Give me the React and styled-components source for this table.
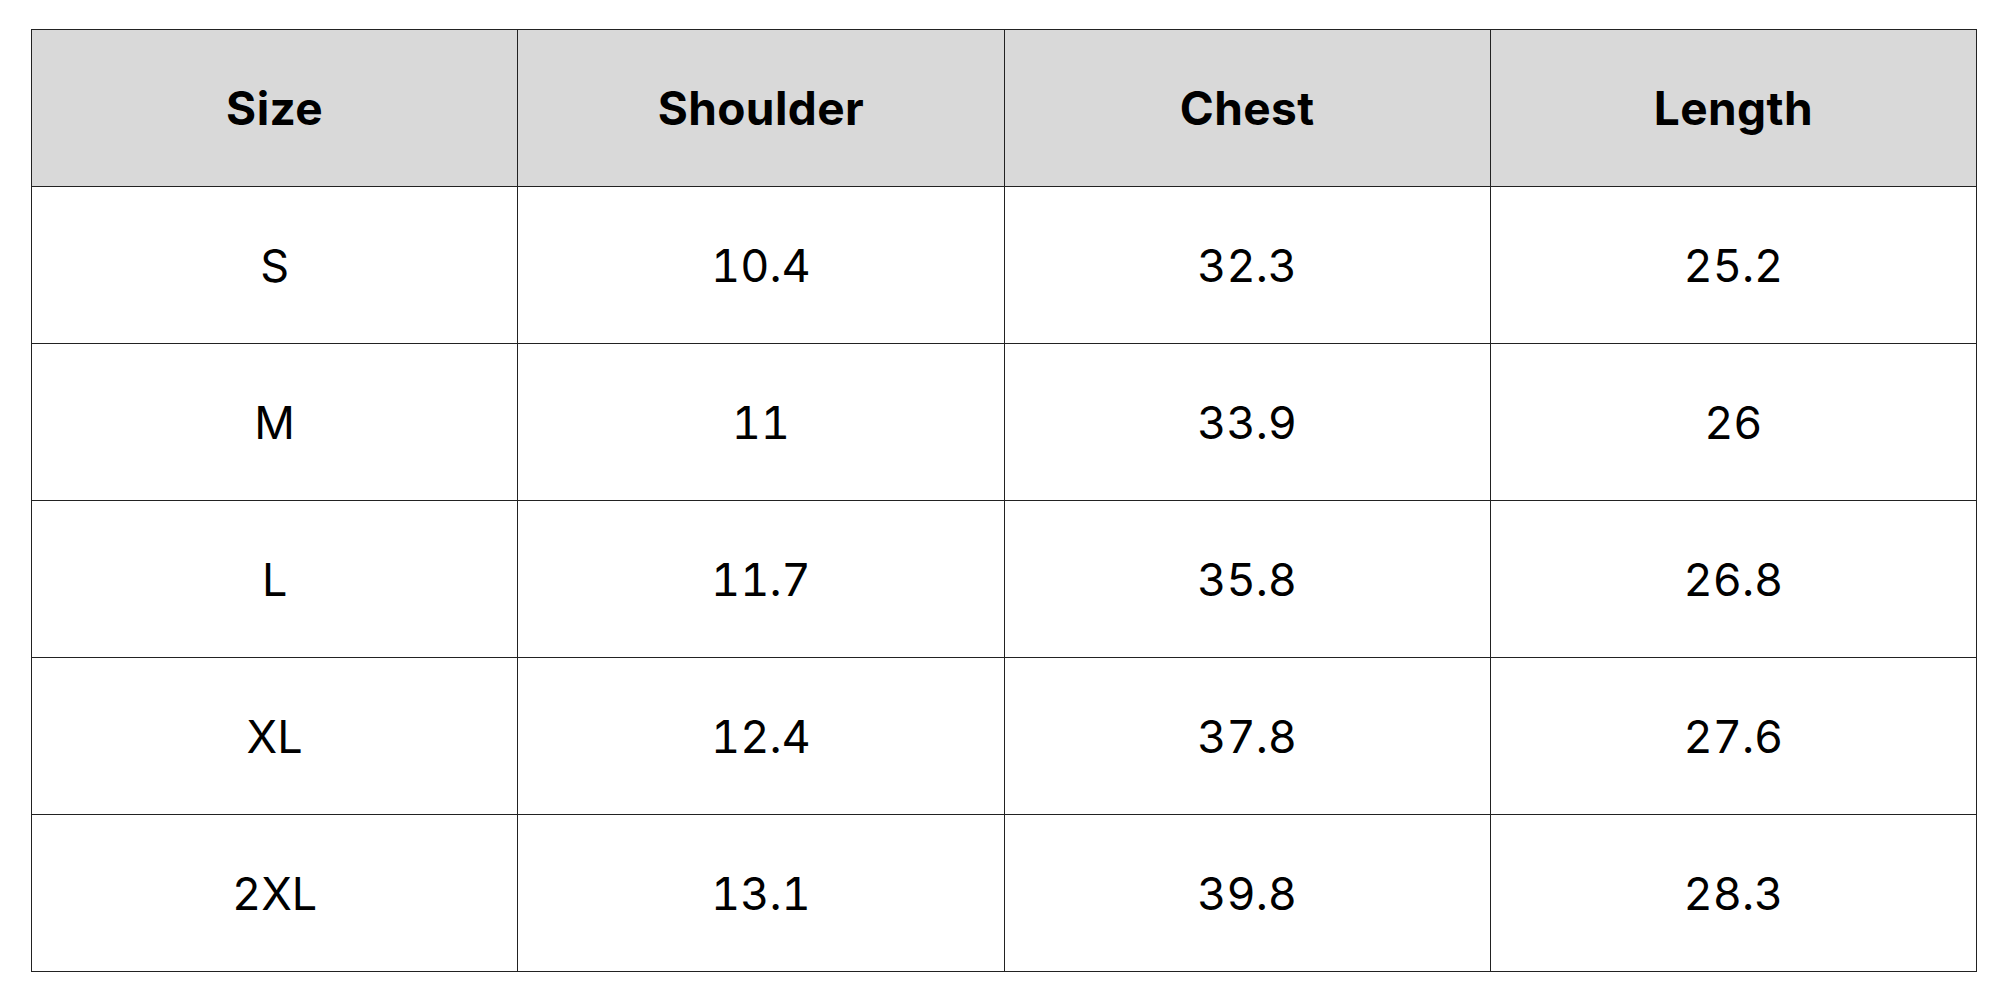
import React from "react"
import styled, { createGlobalStyle } from "styled-components"

const GlobalStyle = createGlobalStyle`
  html, body {
    margin: 0;
    padding: 0;
    background: #ffffff;
  }
  body {
    font-family: Inter, "Open Sans", sans-serif;
    color: #000;
  }
`

const Page = styled.div`
  width: 2000px;
  height: 1000px;
  padding: 29px 23px 0 31px;
  box-sizing: border-box;
`

const Table = styled.table`
  width: 1946px;
  border-collapse: collapse;
  table-layout: fixed;
  border: 1.5px solid #444;
`

const HeadCell = styled.th`
  height: 156px;
  background: #d9d9d9;
  border: 1px solid #222;
  font-size: 46px;
  font-weight: 700;
  text-align: center;
  vertical-align: middle;
  padding: 0;
  letter-spacing: 0.4px;
`

const Cell = styled.td`
  height: 156px;
  border: 1px solid #222;
  font-size: 45px;
  font-weight: 400;
  font-variant-numeric: tabular-nums;
  text-align: center;
  vertical-align: middle;
  padding: 0;
`

const columns = ["Size", "Shoulder", "Chest", "Length"]

const rows = [
  ["S", "10.4", "32.3", "25.2"],
  ["M", "11", "33.9", "26"],
  ["L", "11.7", "35.8", "26.8"],
  ["XL", "12.4", "37.8", "27.6"],
  ["2XL", "13.1", "39.8", "28.3"],
]

export default function App() {
  return (
    <Page>
      <GlobalStyle />
      <Table>
        <thead>
          <tr>
            {columns.map(c => (
              <HeadCell key={c}>{c}</HeadCell>
            ))}
          </tr>
        </thead>
        <tbody>
          {rows.map(r => (
            <tr key={r[0]}>
              {r.map((v, i) => (
                <Cell key={i}>{v}</Cell>
              ))}
            </tr>
          ))}
        </tbody>
      </Table>
    </Page>
  )
}
